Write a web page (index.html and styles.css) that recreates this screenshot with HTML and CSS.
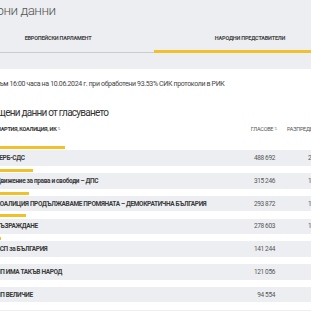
FILE: index.html
```html
<!DOCTYPE html>
<html lang="bg">
<head>
<meta charset="utf-8">
<link rel="stylesheet" href="styles.css">
</head>
<body>
<div class="page">
  <header class="top">
    <h1 class="title">Изборни данни</h1>
    <nav class="tabs">
      <div class="tab">Европейски парламент</div>
      <div class="tab active">Народни представители</div>
    </nav>
  </header>
  <p class="info">Данни към 16:00 часа на 10.06.2024 г. при обработени 93.53% СИК протоколи в РИК</p>
  <h2 class="heading">Обобщени данни от гласуването</h2>
  <div class="table">
    <div class="thead">
      <span class="num"></span>
      <span class="name">Партия, коалиция, ИК<i class="sort">⇅</i></span>
      <span class="votes">Гласове<i class="sort">⇅</i></span>
      <span class="pct">Разпределение</span>
    </div>
    <div class="item">
      <div class="bar" style="width:90px"></div>
      <div class="row"><span class="num">1</span><span class="name">ГЕРБ-СДС</span><span class="votes">488 692</span><span class="pct">24.74%</span></div>
    </div>
    <div class="item">
      <div class="bar" style="width:58px"></div>
      <div class="row"><span class="num">2</span><span class="name">Движение за права и свободи – ДПС</span><span class="votes">315 246</span><span class="pct">15.96%</span></div>
    </div>
    <div class="item">
      <div class="bar" style="width:54px"></div>
      <div class="row"><span class="num">3</span><span class="name">КОАЛИЦИЯ ПРОДЪЛЖАВАМЕ ПРОМЯНАТА – ДЕМОКРАТИЧНА БЪЛГАРИЯ</span><span class="votes">293 872</span><span class="pct">14.88%</span></div>
    </div>
    <div class="item">
      <div class="bar" style="width:51px"></div>
      <div class="row"><span class="num">4</span><span class="name">ВЪЗРАЖДАНЕ</span><span class="votes">278 603</span><span class="pct">14.11%</span></div>
    </div>
    <div class="item">
      <div class="bar" style="width:26px"></div>
      <div class="row"><span class="num">5</span><span class="name">БСП за БЪЛГАРИЯ</span><span class="votes">141 244</span><span class="pct">7.15%</span></div>
    </div>
    <div class="item">
      <div class="bar" style="width:22px"></div>
      <div class="row"><span class="num">6</span><span class="name">ПП ИМА ТАКЪВ НАРОД</span><span class="votes">121 056</span><span class="pct">6.13%</span></div>
    </div>
    <div class="item">
      <div class="bar" style="width:17px"></div>
      <div class="row"><span class="num">7</span><span class="name">ПП ВЕЛИЧИЕ</span><span class="votes">94 554</span><span class="pct">4.79%</span></div>
    </div>
    <div class="item">
      <div class="bar" style="width:12px"></div>
      <div class="row"><span class="num">8</span><span class="name">МЕЧ</span><span class="votes">65 000</span><span class="pct">3.29%</span></div>
    </div>
  </div>
</div>
</body>
</html>
```
FILE: styles.css
```css
html, body {
  margin: 0;
  padding: 0;
  background: #ffffff;
  overflow: hidden;
}
body {
  width: 311px;
  height: 311px;
  font-family: Roboto, "DejaVu Sans Condensed", sans-serif;
  color: #333;
}
.page {
  margin-left: -36px;
  width: 364px;
}
.top {
  background: #eceef1;
  height: 69px;
  padding-top: 1px;
  box-sizing: border-box;
}
.title {
  margin: 0 0 0 3px;
  font-weight: 300;
  font-size: 13.5px;
  letter-spacing: -0.5px;
  line-height: 18px;
  color: #555;
}
.tabs {
  display: flex;
  margin-top: 10px;
  width: 384px;
  margin-left: -2px;
  border-bottom: 1px solid #c9ccd1;
}
.tab {
  flex: 1;
  text-align: center;
  text-transform: uppercase;
  font-weight: bold;
  font-size: 5.5px;
  letter-spacing: -0.2px;
  color: #444;
  padding: 6px 0 9px;
  border-bottom: 2px solid transparent;
  margin-bottom: -1px;
}
.tab.active {
  border-bottom: 3px solid #f0c02d;
}
.info {
  margin: 10px 0 0 11px;
  font-size: 7px;
  letter-spacing: -0.35px;
  line-height: 10px;
  color: #444;
}
.heading {
  margin: 17px 0 0 13px;
  font-weight: 400;
  font-size: 10px;
  letter-spacing: -0.75px;
  line-height: 14px;
  color: #333;
}
.table {
  margin-top: 4px;
}
.thead, .row {
  display: grid;
  grid-template-columns: 32px 248px 42px 42px;
  align-items: center;
}
.thead {
  font-size: 5.5px;
  letter-spacing: -0.25px;
  font-weight: bold;
  text-transform: uppercase;
  height: 10px;
  color: #333;
  margin-bottom: 9px;
}
.thead .name {
  padding-left: 1px;
}
.thead .votes, .thead .pct {
  font-weight: normal;
  color: #555;
}
.thead .votes {
  text-align: right;
  padding-right: 9px;
}
.thead .pct {
  padding-left: 1px;
}
.sort {
  font-style: normal;
  font-weight: normal;
  color: #999;
  margin-left: 1px;
  font-size: 4px;
  vertical-align: top;
}
.item {
  padding-top: 3px;
}
.item:first-of-type {
  padding-top: 0;
}
.bar {
  height: 3px;
  background: #f0c02d;
  margin-left: 11px;
  margin-bottom: 1.2px;
}
.row {
  background: #eceef1;
  height: 15.6px;
  font-size: 6.5px;
  letter-spacing: -0.35px;
}
.row .name {
  font-weight: bold;
  color: #3a3a3a;
  white-space: nowrap;
}
.row .votes {
  text-align: right;
  color: #555;
  padding-right: 11px;
}
.row .pct {
  text-align: right;
  color: #555;
  padding-right: 1px;
}
.num {
  visibility: hidden;
}
.votes, .pct {
  white-space: nowrap;
}
```
